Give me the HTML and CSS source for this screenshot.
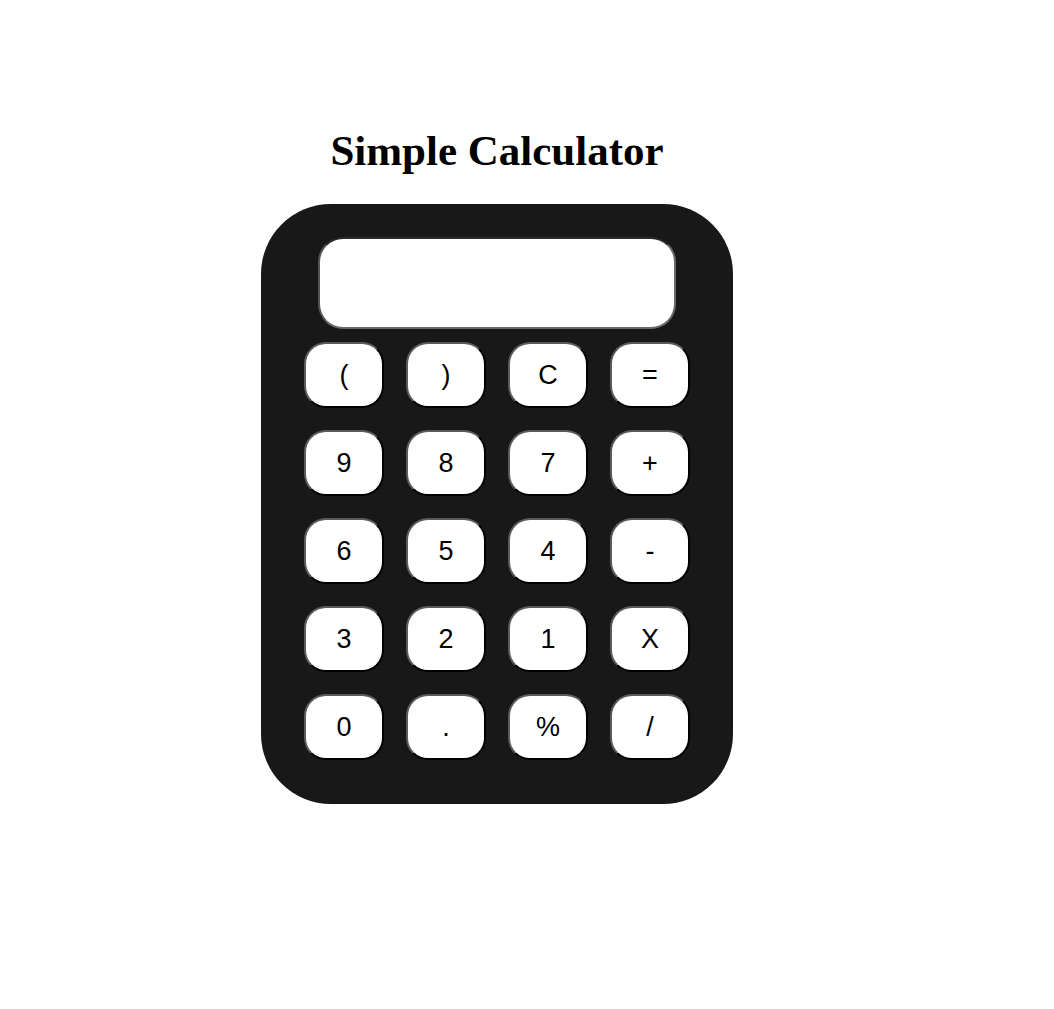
FILE: index.html
```html
<!DOCTYPE html>
<html>
<head>
<meta charset="utf-8">
<title>Simple Calculator</title>
<link rel="stylesheet" href="styles.css">
</head>
<body>
<div class="page">
  <h1 class="title">Simple Calculator</h1>
  <div class="calculator">
    <input class="display" type="text" value="">
    <div class="keys">
      <button class="key">(</button>
      <button class="key">)</button>
      <button class="key">C</button>
      <button class="key">=</button>
      <button class="key">9</button>
      <button class="key">8</button>
      <button class="key">7</button>
      <button class="key">+</button>
      <button class="key">6</button>
      <button class="key">5</button>
      <button class="key">4</button>
      <button class="key">-</button>
      <button class="key">3</button>
      <button class="key">2</button>
      <button class="key">1</button>
      <button class="key">X</button>
      <button class="key">0</button>
      <button class="key">.</button>
      <button class="key">%</button>
      <button class="key">/</button>
    </div>
  </div>
</div>
</body>
</html>
```

FILE: styles.css
```css
html, body {
  margin: 0;
  padding: 0;
  background: #ffffff;
}

.page {
  width: 472px;
  padding: 127px 0 0 261px;
}

.title {
  margin: 0 0 30px 0;
  font-family: "Liberation Serif", "Times New Roman", serif;
  font-weight: bold;
  font-size: 43px;
  line-height: 47px;
  text-align: center;
  color: #000;
}

.calculator {
  box-sizing: border-box;
  width: 472px;
  height: 600px;
  background: #181818;
  border-radius: 70px;
  padding: 33px 43px 0 43px;
  display: flex;
  flex-direction: column;
  align-items: center;
}

.display {
  box-sizing: border-box;
  width: 358px;
  height: 92px;
  margin: 0 0 13px 0;
  border: 2px solid;
  border-color: #2a2a2a #6a6a6a #6a6a6a #555555;
  border-radius: 25px;
  background: #ffffff;
  outline: none;
}

.keys {
  display: grid;
  grid-template-columns: repeat(4, 80px);
  grid-auto-rows: 66px;
  column-gap: 22px;
  row-gap: 22px;
}

.key {
  box-sizing: border-box;
  width: 80px;
  height: 66px;
  margin: 0;
  padding: 0;
  border: 2px solid;
  border-color: #5c5c5c #000000 #000000 #5c5c5c;
  border-radius: 22px;
  background: #ffffff;
  color: #000;
  font-family: "Liberation Sans", Arial, sans-serif;
  font-size: 27px;
  line-height: 1;
}
```
